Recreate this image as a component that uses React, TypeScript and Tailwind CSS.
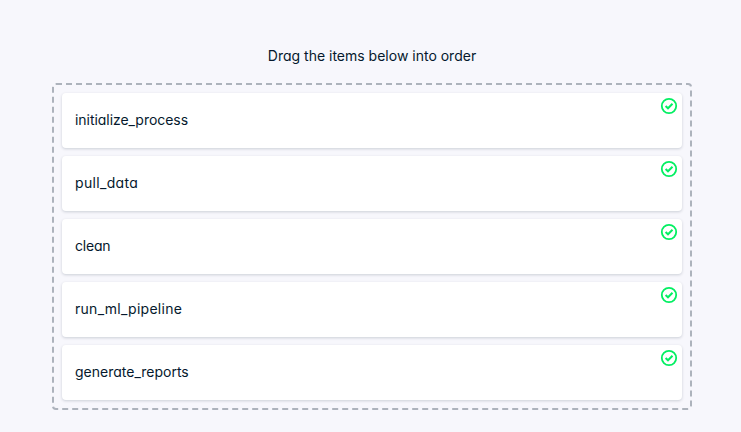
const items = [
  { name: 'initialize_process', tracking: 'tracking-[-0.05px]' },
  { name: 'pull_data', tracking: 'tracking-[0.33px]' },
  { name: 'clean', tracking: 'tracking-[-0.2px]' },
  { name: 'run_ml_pipeline', tracking: 'tracking-[0.27px]' },
  { name: 'generate_reports', tracking: 'tracking-[0px]' },
];

function CheckIcon() {
  return (
    <svg className="absolute top-1 right-1 size-[18px]" viewBox="0 0 18 18" fill="none" stroke="#03ef62" strokeWidth="1.8">
      <circle cx="9" cy="9" r="7.2" />
      <path d="M5.6 9 8 11.3 12.5 6.8" strokeWidth="2" />
    </svg>
  );
}

export default function App() {
  return (
    <main className="flex h-[432px] w-[741px] flex-col bg-[#f7f7fc] pr-[49px] pl-[52px] font-[Inter,sans-serif] text-[14px] leading-[21px] text-[#05192d] [font-feature-settings:'cv11']">
      <p className="mt-[45px] mb-[17px] text-center">Drag the items below into order</p>
      <ul className="flex flex-col gap-2 rounded border-2 border-dashed border-[#adb3bc] p-2">
        {items.map((item) => (
          <li
            key={item.name}
            className="relative flex h-[55px] items-center rounded bg-white px-[13px] pb-0.5 shadow-[0_1px_3px_rgba(5,25,45,0.18)]"
          >
            <span className={item.tracking}>{item.name}</span>
            <CheckIcon />
          </li>
        ))}
      </ul>
    </main>
  );
}
